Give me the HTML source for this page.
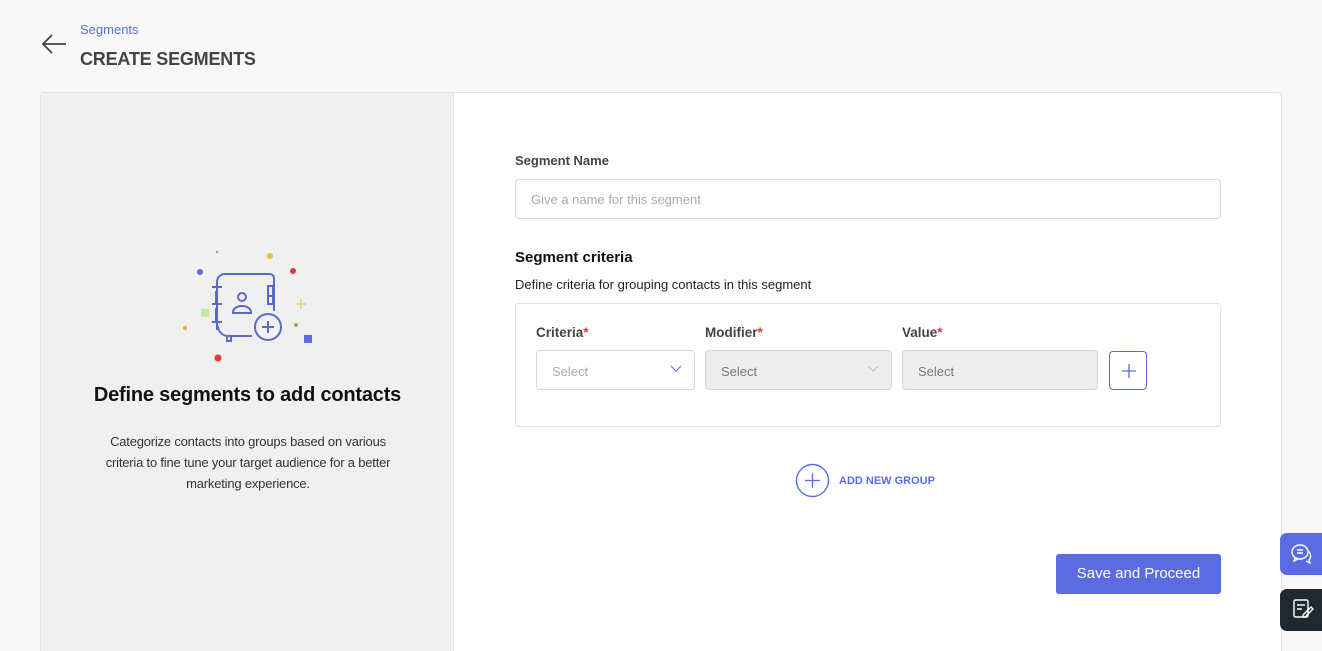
<!DOCTYPE html>
<html><head><style>
*{box-sizing:border-box;margin:0;padding:0}
html,body{width:1322px;height:651px;overflow:hidden}
body{background:#f8f8f8;font-family:"Liberation Sans",sans-serif;color:#333;position:relative}
.abs{position:absolute}
.lbl{font-size:14px;font-weight:bold;color:#444}
.star{color:#e53935}
.sel{position:absolute;top:350px;height:40px;border:1px solid #d6d6d6;border-radius:4px;font-size:13px;padding:13px 0 0 15px;color:#aaa}
.dis{background:#eee;color:#777}
</style></head><body>
<svg class="abs" style="left:40px;top:33px" width="28" height="22" viewBox="0 0 28 22"><path d="M26 11H3M12 2L3 11l9 9" fill="none" stroke="#444" stroke-width="1.8"/></svg>
<div class="abs" style="left:80px;top:22px;font-size:13px;color:#5b6ce0">Segments</div>
<div class="abs" style="left:80px;top:49px;font-size:18px;font-weight:bold;color:#444;letter-spacing:-0.2px">CREATE SEGMENTS</div>
<div class="abs" style="left:40px;top:92px;width:1242px;height:559px;border:1px solid #e2e2e2;border-bottom:none;border-radius:4px 4px 0 0;background:#fff"></div>
<div class="abs" style="left:41px;top:93px;width:413px;height:558px;background:#f0f0f0;border-right:1px solid #e2e2e2"></div>
<svg class="abs" style="left:170px;top:240px" width="160" height="130" viewBox="0 0 160 130">
<g fill="none" stroke="#5b6ac9" stroke-width="2">
<path d="M47 90V42a8 8 0 0 1 8-8h45a4 4 0 0 1 4 4v33"/><path d="M82 96H58a10 10 0 0 1-10-10"/>
<path d="M42 47h10M46 51v13M42 64h10M46 68v13M42 82h10"/>
<path d="M98 46h5v18h-5zM98 56h5"/>
<circle cx="72" cy="57" r="4"/><path d="M63 72a9 6 0 0 1 18 0v1H63z"/>
<circle cx="98" cy="87" r="13"/><path d="M92 87h12M98 81v12"/>
<path d="M57 96v5h4v-5"/>
</g>
<circle cx="30" cy="32" r="3" fill="#5b6ce0"/><circle cx="47" cy="12" r="1.2" fill="#999"/>
<circle cx="100" cy="16" r="3" fill="#e8c030"/><circle cx="123" cy="31" r="3" fill="#e53935"/>
<rect x="31" y="69" width="8" height="8" fill="#c6e6a0"/><circle cx="15" cy="88" r="2" fill="#e8a030"/>
<path d="M131 59v10M126 64h10" stroke="#e8d080" stroke-width="1.5"/>
<circle cx="126" cy="85" r="2" fill="#7cc040"/><rect x="134" y="95" width="8" height="8" fill="#5b6ce0"/>
<circle cx="48" cy="118" r="3.5" fill="#e53935"/>
</svg>
<div class="abs" style="left:41px;top:384px;width:413px;text-align:center;font-size:20px;font-weight:bold;color:#111;letter-spacing:-0.2px">Define segments to add contacts</div>
<div class="abs" style="left:83px;top:431px;width:330px;text-align:center;font-size:13px;line-height:21px;color:#333;letter-spacing:-0.2px">Categorize contacts into groups based on various<br>criteria to fine tune your target audience for a better<br>marketing experience.</div>
<div class="abs lbl" style="left:515px;top:153px;font-size:13px">Segment Name</div>
<div class="abs" style="left:515px;top:179px;width:706px;height:40px;border:1px solid #d6d6d6;border-radius:4px;font-size:13px;color:#aaa;padding:12px 15px">Give a name for this segment</div>
<div class="abs" style="left:515px;top:249px;font-size:15px;font-weight:bold;color:#111">Segment criteria</div>
<div class="abs" style="left:515px;top:277px;font-size:13px;color:#222">Define criteria for grouping contacts in this segment</div>
<div class="abs" style="left:515px;top:303px;width:706px;height:124px;border:1px solid #e2e2e2;border-radius:4px"></div>
<div class="abs lbl" style="left:536px;top:325px;font-size:13.5px">Criteria<span class="star">*</span></div>
<div class="abs lbl" style="left:705px;top:325px;font-size:13.5px">Modifier<span class="star">*</span></div>
<div class="abs lbl" style="left:902px;top:325px;font-size:13.5px">Value<span class="star">*</span></div>
<div class="sel" style="left:536px;width:159px">Select<svg class="abs" style="right:12px;top:14px" width="12" height="8"><path d="M1 1l5 5 5-5" fill="none" stroke="#5b6ce0" stroke-width="1"/></svg></div>
<div class="sel dis" style="left:705px;width:187px">Select<svg class="abs" style="right:12px;top:14px" width="12" height="8"><path d="M1 1l5 5 5-5" fill="none" stroke="#bbb" stroke-width="1"/></svg></div>
<div class="sel dis" style="left:902px;width:196px">Select</div>
<div class="abs" style="left:1109px;top:351px;width:38px;height:39px;border:1px solid #5b6ce0;border-radius:4px"><svg class="abs" style="left:11px;top:11px" width="16" height="16"><path d="M8 1v14M1 8h14" stroke="#5b6ce0" stroke-width="1.3"/></svg></div>
<svg class="abs" style="left:795px;top:463px" width="35" height="35"><circle cx="17.5" cy="17.5" r="16" fill="none" stroke="#5b6ce0" stroke-width="1.4"/><path d="M17.5 10v15M10 17.5h15" stroke="#5b6ce0" stroke-width="1.3"/></svg>
<div class="abs" style="left:839px;top:475px;font-size:11px;font-weight:bold;color:#5b6ce0">ADD NEW GROUP</div>
<div class="abs" style="left:1056px;top:554px;width:165px;height:40px;background:#5b6ce0;border-radius:3px;color:#fff;font-size:15px;text-align:center;line-height:40px">Save and Proceed</div>
<div class="abs" style="left:1280px;top:533px;width:42px;height:42px;background:#5b6ce0;border-radius:7px 0 0 7px"><svg class="abs" style="left:10px;top:9px" width="24" height="24" viewBox="0 0 24 24" fill="none" stroke="#fff" stroke-width="1.4"><ellipse cx="10" cy="10" rx="8" ry="7"/><path d="M7 8h6M7 11h6M5 16l-1 3 4-2M18 9a6 6 0 0 1 1 9l1 3-4-2"/></svg></div>
<div class="abs" style="left:1280px;top:589px;width:42px;height:42px;background:#1f2a30;border-radius:7px 0 0 7px"><svg class="abs" style="left:11px;top:8px" width="24" height="24" viewBox="0 0 24 24" fill="none" stroke="#fff" stroke-width="1.4"><rect x="3" y="3" width="14" height="17" rx="1.5"/><path d="M6 8h8M6 12h5M12 18l8-8 2 2-8 8h-2z"/></svg></div>
</body></html>
